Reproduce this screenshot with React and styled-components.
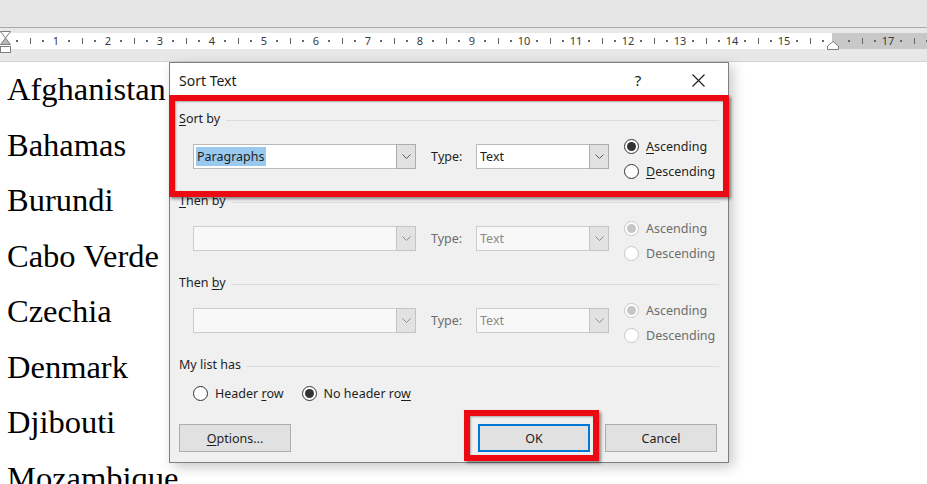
import React from "react";
import styled, { createGlobalStyle, css } from "styled-components";

const GlobalStyle = createGlobalStyle`
  html, body {
    margin: 0;
    padding: 0;
    background: #ffffff;
    overflow: hidden;
  }
  * {
    box-sizing: border-box;
  }
`;

const UI_FONT = `"Noto Sans", "Open Sans", sans-serif`;

const countries = [
  "Afghanistan",
  "Bahamas",
  "Burundi",
  "Cabo Verde",
  "Czechia",
  "Denmark",
  "Djibouti",
  "Mozambique",
];

const App = () => {
  return (
    <Page>
      <GlobalStyle />
      <TopBar />
      <RulerBand>
        <IndentMarker>
          <svg width="11" height="26" viewBox="0 0 11 26">
            <path d="M0.5 0.5 H10.5 L5.5 7 Z" fill="#fff" stroke="#7d7d7d" />
            <path d="M5.5 7 L10.5 13.5 H0.5 Z" fill="#b8b8b8" stroke="#7d7d7d" />
            <rect x="0.5" y="15.5" width="10" height="6" fill="#fff" stroke="#7d7d7d" />
          </svg>
        </IndentMarker>
        <RulerStrip>
          <Ruler />
          <Margin />
        </RulerStrip>
        <RightIndent>
          <svg width="12" height="9" viewBox="0 0 12 9">
            <path d="M0.5 8.5 V5 L6 0.5 L11.5 5 V8.5 Z" fill="#fff" stroke="#7d7d7d" />
          </svg>
        </RightIndent>
      </RulerBand>
      <Document>
        {countries.map((c) => (
          <Line key={c}>{c}</Line>
        ))}
      </Document>

      <SortDialog />

      <Highlight style={{ left: 169, top: 95, width: 560, height: 102 }} />
      <Highlight style={{ left: 464, top: 410, width: 135, height: 51 }} />
    </Page>
  );
};

const Ruler = () => {
  const cells = [];
  for (let n = 1; n <= 17; n++) {
    cells.push(<Cell key={n + "a"}><Dot /></Cell>);
    cells.push(<Cell key={n + "b"}><Tick /></Cell>);
    cells.push(<Cell key={n + "c"}><Dot /></Cell>);
    cells.push(<Cell key={n + "d"}>{n === 16 ? "" : n}</Cell>);
  }
  cells.push(<Cell key="xa"><Dot /></Cell>);
  cells.push(<Cell key="xb"><Tick /></Cell>);
  cells.push(<Cell key="xc"><Dot /></Cell>);
  return <RulerCells>{cells}</RulerCells>;
};

const Chevron = ({ disabled }) => (
  <svg width="9" height="5" viewBox="0 0 9 5">
    <path
      d="M0.5 0.5 L4.5 4.5 L8.5 0.5"
      fill="none"
      stroke={disabled ? "#8a8a8a" : "#5a5a5a"}
      strokeWidth="1"
    />
  </svg>
);

const ComboBox = ({ width, value, selected, disabled }) => (
  <Combo $width={width} $disabled={disabled}>
    <ComboValue $disabled={disabled}>
      {value && <ValueText $selected={selected}>{value}</ValueText>}
    </ComboValue>
    <DropButton $disabled={disabled}>
      <Chevron disabled={disabled} />
    </DropButton>
  </Combo>
);

const Radio = ({ checked, disabled, children }) => (
  <RadioItem $disabled={disabled}>
    <RadioCircle $disabled={disabled}>{checked && <RadioDot $disabled={disabled} />}</RadioCircle>
    <span>{children}</span>
  </RadioItem>
);

const SortSection = ({ label, disabled, first }) => (
  <Section>
    <GroupHeader>
      <GroupLabel>{label}</GroupLabel>
      <Rule />
    </GroupHeader>
    <SortRow>
      <ComboSlot>
        <ComboBox width={223} value={first ? "Paragraphs" : ""} selected={first} disabled={disabled} />
      </ComboSlot>
      <TypeLabel $disabled={disabled}>
        {first ? (
          <>
            T<u>y</u>pe:
          </>
        ) : (
          "Type:"
        )}
      </TypeLabel>
      <ComboSlot>
        <ComboBox width={133} value="Text" disabled={disabled} />
      </ComboSlot>
      <RadioGroup>
        <Radio checked disabled={disabled}>
          {first ? (
            <>
              <u>A</u>scending
            </>
          ) : (
            "Ascending"
          )}
        </Radio>
        <Radio disabled={disabled}>
          {first ? (
            <>
              <u>D</u>escending
            </>
          ) : (
            "Descending"
          )}
        </Radio>
      </RadioGroup>
    </SortRow>
  </Section>
);

const SortDialog = () => (
  <Dialog>
    <TitleBar>
      <Title>Sort Text</Title>
      <TitleButtons>
        <TitleButton>?</TitleButton>
        <TitleButton $wide>
          <svg width="13" height="13" viewBox="0 0 13 13">
            <path d="M0.5 0.5 L12.5 12.5 M12.5 0.5 L0.5 12.5" stroke="#1a1a1a" strokeWidth="1.1" />
          </svg>
        </TitleButton>
      </TitleButtons>
    </TitleBar>
    <Body>
      <SortSection
        first
        label={
          <>
            <u>S</u>ort by
          </>
        }
      />
      <SortSection
        disabled
        label={
          <>
            <u>T</u>hen by
          </>
        }
      />
      <SortSection
        disabled
        label={
          <>
            Then <u>b</u>y
          </>
        }
      />
      <Section $compact>
        <GroupHeader>
          <GroupLabel>My list has</GroupLabel>
          <Rule />
        </GroupHeader>
        <HeaderRow>
          <Radio>
            Header <u>r</u>ow
          </Radio>
          <Radio checked>
            No header ro<u>w</u>
          </Radio>
        </HeaderRow>
      </Section>
      <ButtonRow>
        <Button>
          <u>O</u>ptions...
        </Button>
        <Spacer />
        <Button $default>OK</Button>
        <Button>Cancel</Button>
      </ButtonRow>
    </Body>
  </Dialog>
);

export default App;

const Page = styled.div`
  position: relative;
  width: 927px;
  height: 484px;
  overflow: hidden;
  display: flex;
  flex-direction: column;
  background: #fff;
`;

const TopBar = styled.div`
  flex: 0 0 28px;
  background: #e6e6e6;
  border-bottom: 1px solid #a9a9a9;
`;

const RulerBand = styled.div`
  position: relative;
  flex: 0 0 34px;
  background: #e8e8e8;
  padding-top: 5px;
  border-bottom: 1px solid #d2d2d2;
`;

const RulerStrip = styled.div`
  position: relative;
  height: 16px;
  background: #c8c8c8;
  overflow: hidden;
`;

const Margin = styled.div`
  position: absolute;
  left: 0;
  top: 0;
  bottom: 0;
  width: 832px;
  background: #fff;
`;

const RulerCells = styled.div`
  position: relative;
  z-index: 1;
  display: flex;
  height: 100%;
  padding-left: 10.5px;
`;

const Cell = styled.div`
  flex: 0 0 13px;
  display: flex;
  align-items: center;
  justify-content: center;
  font-family: ${UI_FONT};
  font-size: 11px;
  color: #3a3a3a;
  line-height: 16px;
`;

const Dot = styled.span`
  width: 2px;
  height: 2px;
  background: #666;
`;

const Tick = styled.span`
  width: 1px;
  height: 6px;
  background: #666;
`;

const IndentMarker = styled.div`
  position: absolute;
  left: 0;
  top: 3px;
  z-index: 2;
  display: flex;
`;

const RightIndent = styled.div`
  position: absolute;
  left: 827px;
  top: 13px;
  z-index: 2;
  display: flex;
`;

const Document = styled.div`
  flex: 1;
  min-height: 0;
  padding: 0 0 0 7px;
  font-family: "Liberation Serif", "Times New Roman", serif;
  font-size: 32.5px;
  line-height: 55.5px;
  color: #000;
`;

const Line = styled.div`
  white-space: nowrap;
`;

const Dialog = styled.div`
  position: absolute;
  left: 169px;
  top: 62px;
  width: 560px;
  height: 401px;
  display: flex;
  flex-direction: column;
  background: #f0f0f0;
  border: 1px solid #7f7f7f;
  box-shadow: 4px 4px 12px rgba(0, 0, 0, 0.22);
  font-family: ${UI_FONT};
  font-size: 12.5px;
  color: #1e1e1e;
  u {
    text-decoration: underline;
    text-underline-offset: 2px;
  }
`;

const TitleBar = styled.div`
  height: 34px;
  flex: 0 0 34px;
  display: flex;
  align-items: center;
  justify-content: space-between;
  background: #fff;
  padding-left: 9px;
`;

const Title = styled.div`
  font-size: 14px;
  color: #1a1a1a;
`;

const TitleButtons = styled.div`
  display: flex;
  align-items: center;
  gap: 17px;
  height: 100%;
  padding-right: 7px;
`;

const TitleButton = styled.div`
  width: ${(p) => (p.$wide ? 46 : 40)}px;
  height: 100%;
  display: flex;
  align-items: center;
  justify-content: center;
  font-size: 15px;
  color: #1a1a1a;
`;

const Body = styled.div`
  flex: 1;
  display: flex;
  flex-direction: column;
  padding: 14px 9px 10px 9px;
`;

const Section = styled.div`
  display: flex;
  flex-direction: column;
  height: ${(p) => (p.$compact ? 46 : 82)}px;
`;

const GroupHeader = styled.div`
  display: flex;
  align-items: center;
  height: 16px;
  gap: 6px;
`;

const GroupLabel = styled.span`
  white-space: nowrap;
  line-height: 16px;
`;

const Rule = styled.div`
  flex: 1;
  height: 1px;
  background: #dcdcdc;
  margin-top: 2px;
`;

const SortRow = styled.div`
  display: flex;
  align-items: flex-start;
  height: 50px;
  margin-top: 7px;
  padding-left: 14px;
`;

const ComboSlot = styled.div`
  margin-top: 10px;
  display: flex;
`;

const Combo = styled.div`
  width: ${(p) => p.$width}px;
  height: 25px;
  display: flex;
  border: 1px solid ${(p) => (p.$disabled ? "#cccccc" : "#b9b9b9")};
  background: ${(p) => (p.$disabled ? "#f8f8f8" : "#ffffff")};
`;

const ComboValue = styled.div`
  flex: 1;
  display: flex;
  align-items: center;
  padding-left: 2px;
  color: ${(p) => (p.$disabled ? "#8a8a8a" : "#1e1e1e")};
`;

const ValueText = styled.span`
  padding: 0 1px;
  line-height: 19px;
  ${(p) =>
    p.$selected &&
    css`
      background: #99c9ef;
    `}
`;

const DropButton = styled.div`
  width: 20px;
  margin: -1px -1px -1px 0;
  display: flex;
  align-items: center;
  justify-content: center;
  background: ${(p) => (p.$disabled ? "#e2e2e2" : "#e1e1e1")};
  border: 1px solid ${(p) => (p.$disabled ? "#c4c4c4" : "#adadad")};
`;

const TypeLabel = styled.div`
  width: 60px;
  padding-left: 15px;
  height: 25px;
  margin-top: 10px;
  display: flex;
  align-items: center;
  color: ${(p) => (p.$disabled ? "#6d6d6d" : "#1e1e1e")};
`;

const RadioGroup = styled.div`
  display: flex;
  flex-direction: column;
  margin-left: 15px;
`;

const RadioItem = styled.div`
  height: 25px;
  display: flex;
  align-items: center;
  gap: 7px;
  white-space: nowrap;
  color: ${(p) => (p.$disabled ? "#6d6d6d" : "#1e1e1e")};
`;

const RadioCircle = styled.span`
  width: 15px;
  height: 15px;
  border-radius: 50%;
  background: #fff;
  border: 1px solid ${(p) => (p.$disabled ? "#c6c6c6" : "#333333")};
  display: flex;
  align-items: center;
  justify-content: center;
`;

const RadioDot = styled.span`
  width: 9px;
  height: 9px;
  border-radius: 50%;
  background: ${(p) => (p.$disabled ? "#c6c6c6" : "#333333")};
`;

const HeaderRow = styled.div`
  display: flex;
  align-items: center;
  gap: 18px;
  height: 20px;
  margin-top: 10px;
  padding-left: 14px;
`;

const ButtonRow = styled.div`
  display: flex;
  align-items: center;
  gap: 15px;
  margin-top: auto;
  padding-right: 2px;
`;

const Spacer = styled.div`
  flex: 1;
`;

const Button = styled.div`
  width: 112px;
  height: 28px;
  display: flex;
  align-items: center;
  justify-content: center;
  background: #e1e1e1;
  border: 1px solid ${(p) => (p.$default ? "#0078d7" : "#adadad")};
  ${(p) =>
    p.$default &&
    css`
      box-shadow: inset 0 0 0 1px #0078d7;
    `}
`;

const Highlight = styled.div`
  position: absolute;
  border: 6px solid #ec0a12;
  box-shadow: 2px 2px 3px rgba(0, 0, 0, 0.45), inset 1px 1px 2px rgba(0, 0, 0, 0.3);
  pointer-events: none;
`;
